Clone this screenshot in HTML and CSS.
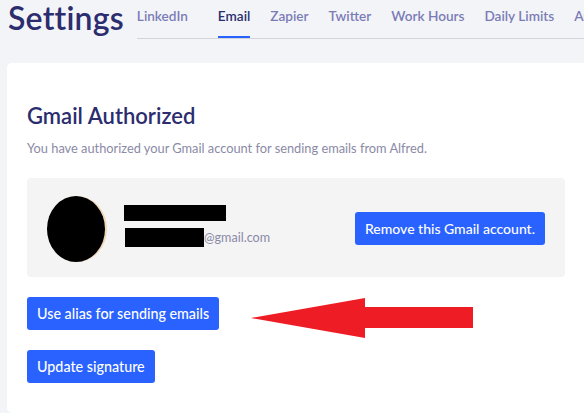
FILE: index.html
```html
<!DOCTYPE html>
<html>
<head>
<meta charset="utf-8">
<link rel="stylesheet" href="styles.css">
</head>
<body>
<header class="top">
  <h1 class="title">Settings</h1>
  <nav class="tabs">
    <span class="tab first">LinkedIn</span>
    <span class="tab active">Email</span>
    <span class="tab">Zapier</span>
    <span class="tab">Twitter</span>
    <span class="tab">Work Hours</span>
    <span class="tab">Daily Limits</span>
    <span class="tab">Auto</span>
  </nav>
</header>
<main class="card">
  <h2 class="heading">Gmail Authorized</h2>
  <p class="sub">You have authorized your Gmail account for sending emails from Alfred.</p>
  <div class="account">
    <div class="avatar"><div class="blot"></div></div>
    <div class="info">
      <div class="name"><span class="redact r1"></span></div>
      <div class="mail"><span class="redact r2"></span><span class="domain">@gmail.com</span></div>
    </div>
    <button class="btn remove">Remove this Gmail account.</button>
  </div>
  <div class="actions">
    <button class="btn">Use alias for sending emails</button>
    <button class="btn">Update signature</button>
  </div>
  <svg class="arrow" width="224" height="44" viewBox="0 0 224 44">
    <polygon points="0,21 114,1 114,10 222,10 222,31 114,31 114,41" fill="#ee1c24"/>
  </svg>
</main>
</body>
</html>
```
FILE: styles.css
```css
* { box-sizing: border-box; }
html, body { margin: 0; padding: 0; }
body {
  background: #f3f4f8;
  font-family: Lato, "Liberation Sans", sans-serif;
  width: 584px;
  height: 413px;
  overflow: hidden;
}
.top {
  display: flex;
  align-items: flex-start;
  padding-left: 8px;
  height: 63px;
  white-space: nowrap;
}
.title {
  margin: -2px 13px 0 0;
  font-size: 32px;
  line-height: 40px;
  font-weight: 600;
  color: #2b2d6e;
  letter-spacing: 0.2px;
}
.tabs {
  display: flex;
  flex: 1;
  border-bottom: 1px solid #d3d4da;
  height: 39px;
  padding-top: 7px;
  overflow: hidden;
}
.tab {
  font-size: 13.6px;
  line-height: 18px;
  color: #7b7cb6;
  font-weight: 600;
  margin-right: 20px;
  height: 31px;
}
.tab.first { margin-right: 30px; }
.tab.active {
  color: #2b2d6e;
  border-bottom: 2px solid #2962ff;
}
.card {
  position: relative;
  background: #fff;
  margin-left: 7px;
  border-radius: 5px 0 0 5px;
  height: 350px;
  padding: 40px 0 0 20px;
}
.heading {
  margin: 0;
  font-size: 22px;
  line-height: 26px;
  font-weight: 600;
  color: #2b2d6e;
}
.sub {
  margin: 12px 0 0;
  font-size: 12.8px;
  line-height: 14px;
  color: #8a8aa6;
}
.account {
  margin-top: 23px;
  width: 538px;
  height: 99px;
  background: #f4f4f5;
  border-radius: 4px;
  display: flex;
  align-items: center;
  padding-left: 20px;
}
.avatar {
  width: 60px;
  height: 66px;
  border-radius: 50%;
  background: #efd7b4;
  margin-top: 3px;
}
.blot {
  width: 58px;
  height: 66px;
  border-radius: 50%;
  background: #000;
}
.info {
  margin-left: 17px;
  display: flex;
  flex-direction: column;
  margin-top: -4px;
}
.name { height: 16px; margin-bottom: 7px; }
.redact { display: inline-block; background: #000; }
.r1 { width: 102px; height: 16px; }
.mail { display: flex; align-items: flex-end; height: 19px; margin-left: 1px; }
.r2 { width: 79px; height: 19px; }
.domain { font-size: 12.6px; line-height: 14px; color: #8a8aa6; margin-bottom: 2px; }
.btn {
  font-family: inherit;
  background: #2962ff;
  color: #fff;
  border: none;
  border-radius: 3px;
  font-size: 14.3px;
  font-weight: 500;
  height: 33px;
  padding: 0 10px;
  cursor: pointer;
}
.remove { margin-left: auto; margin-right: 20px; margin-top: 1px; font-size: 14px; }
.actions {
  margin-top: 20px;
  display: flex;
  flex-direction: column;
  align-items: flex-start;
  gap: 20px;
}
.arrow {
  position: absolute;
  left: 244px;
  top: 234px;
}
```
